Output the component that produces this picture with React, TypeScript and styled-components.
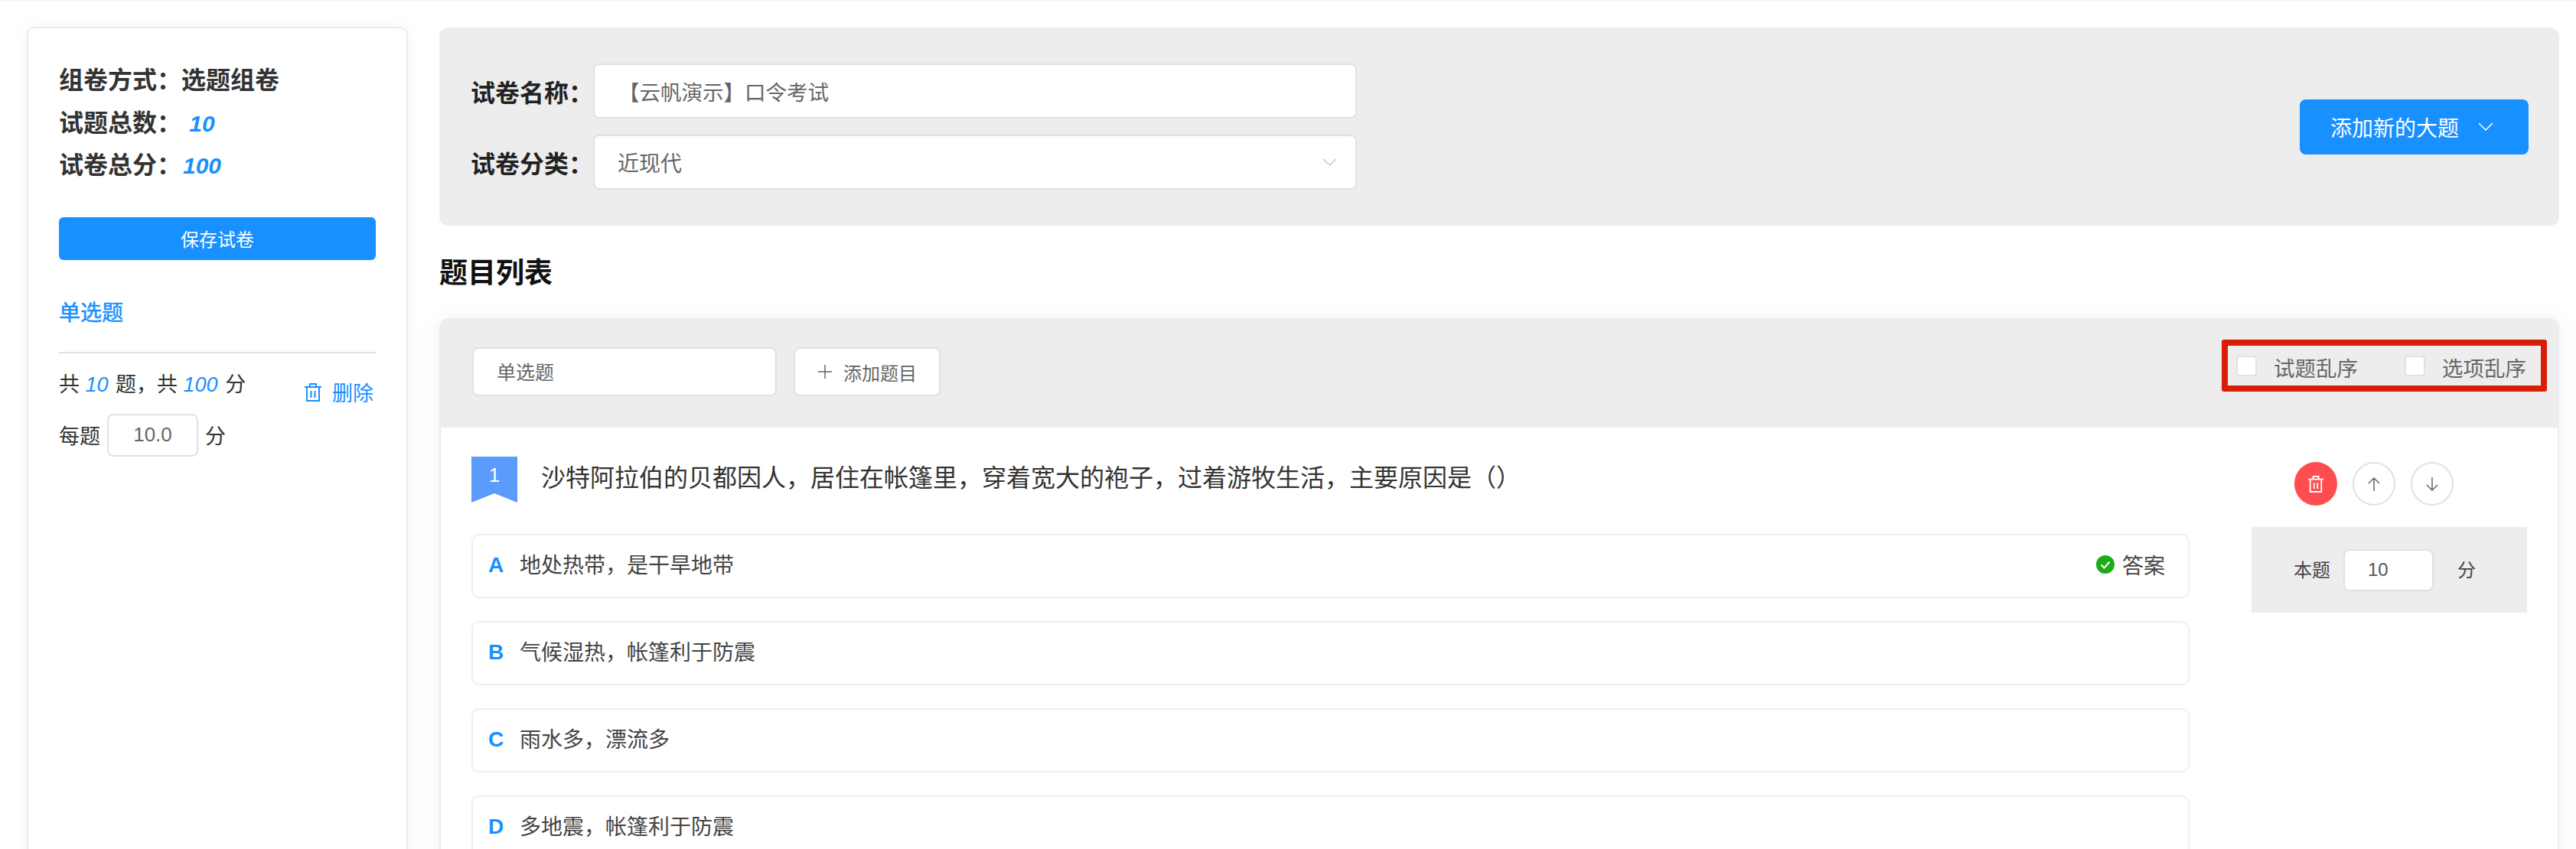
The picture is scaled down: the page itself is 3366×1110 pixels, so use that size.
import React from 'react';
import styled, { createGlobalStyle } from 'styled-components';

const FONT = '"Liberation Sans", "Noto Sans CJK SC", sans-serif';
const BLUE = '#1890ff';
const LINE = '#dfe1e8';
const PANEL = '#ededee';

const options = [
  { letter: 'A', text: '地处热带，是干旱地带', answer: true },
  { letter: 'B', text: '气候湿热，帐篷利于防震', answer: false },
  { letter: 'C', text: '雨水多，漂流多', answer: false },
  { letter: 'D', text: '多地震，帐篷利于防震', answer: false },
];

const TrashIcon = ({ color, w, h }: { color: string; w: number; h: number }) => (
  <svg width={w} height={h} viewBox="0 0 22 24" fill="none" stroke={color} strokeWidth="2">
    <path d="M0 5h22M7 5V1h8v4" />
    <path d="M3 5v18h16V5" />
    <path d="M8.5 10v9M13.5 10v9" />
  </svg>
);

const Chevron = ({ color, w, h }: { color: string; w: number; h: number }) => (
  <svg width={w} height={h} viewBox="0 0 20 11" fill="none" stroke={color} strokeWidth="1.5">
    <path d="M1 1l9 9 9-9" />
  </svg>
);

const ArrowIcon = ({ down }: { down?: boolean }) => (
  <svg width="16" height="18" viewBox="0 0 16 18" fill="none" stroke="#666" strokeWidth="1.5">
    {down ? <path d="M8 0v17M1 10l7 7 7-7" /> : <path d="M8 18V1M1 8l7-7 7 7" />}
  </svg>
);

const CheckCircle = () => (
  <svg width="24" height="24" viewBox="0 0 24 24">
    <circle cx="12" cy="12" r="12" fill="#1aad19" />
    <path d="M6.5 12.5l4 4 7-8" fill="none" stroke="#fff" strokeWidth="2" />
  </svg>
);

export default function App() {
  return (
    <>
      <GlobalStyle />
      <Page>
        <Sidebar>
          <SummaryLine>组卷方式：选题组卷</SummaryLine>
          <SummaryLine>
            试题总数：<SummaryNumber>10</SummaryNumber>
          </SummaryLine>
          <SummaryLine>
            试卷总分：<SummaryNumber>100</SummaryNumber>
          </SummaryLine>
          <SaveButton>保存试卷</SaveButton>
          <TypeTitle>单选题</TypeTitle>
          <Divider />
          <StatRow>
            <StatColumn>
              <StatLine>
                共 <StatNumber>10</StatNumber> 题，共 <StatNumber>100</StatNumber> 分
              </StatLine>
              <ScoreLine>
                每题
                <ScoreInput readOnly value="10.0" />
                分
              </ScoreLine>
            </StatColumn>
            <DeleteLink>
              <TrashIcon color={BLUE} w={22} h={24} />
              删除
            </DeleteLink>
          </StatRow>
        </Sidebar>

        <Main>
          <InfoPanel>
            <InfoForm>
              <FormRow>
                <FormLabel>试卷名称：</FormLabel>
                <TextField readOnly value="【云帆演示】口令考试" />
              </FormRow>
              <FormRow>
                <FormLabel>试卷分类：</FormLabel>
                <SelectField>
                  近现代
                  <Chevron color="#c4c6cf" w={19} h={10} />
                </SelectField>
              </FormRow>
            </InfoForm>
            <AddSectionButton>
              添加新的大题
              <Chevron color="#fff" w={20} h={11} />
            </AddSectionButton>
          </InfoPanel>

          <Heading>题目列表</Heading>

          <SectionCard>
            <SectionBar>
              <BarLeft>
                <TypeInput readOnly value="单选题" />
                <AddQuestionButton>
                  <svg width="20" height="20" viewBox="0 0 20 20" stroke="#666" strokeWidth="1.5">
                    <path d="M10 1v18M1 10h18" />
                  </svg>
                  添加题目
                </AddQuestionButton>
              </BarLeft>
              <ShuffleBox>
                <ShuffleItem>
                  <CheckBox />
                  <span>试题乱序</span>
                </ShuffleItem>
                <ShuffleItem>
                  <CheckBox />
                  <span>选项乱序</span>
                </ShuffleItem>
              </ShuffleBox>
            </SectionBar>

            <QuestionBody>
              <QuestionMain>
                <QuestionHead>
                  <Ribbon>1</Ribbon>
                  <QuestionText>
                    沙特阿拉伯的贝都因人，居住在帐篷里，穿着宽大的袍子，过着游牧生活，主要原因是（）
                  </QuestionText>
                </QuestionHead>
                <OptionList>
                  {options.map((o) => (
                    <OptionRow key={o.letter}>
                      <OptionLetter>{o.letter}</OptionLetter>
                      <OptionText>{o.text}</OptionText>
                      {o.answer && (
                        <AnswerMark>
                          <CheckCircle />
                          答案
                        </AnswerMark>
                      )}
                    </OptionRow>
                  ))}
                </OptionList>
              </QuestionMain>

              <QuestionSide>
                <ActionRow>
                  <RoundButton $danger>
                    <TrashIcon color="#fff" w={20} h={22} />
                  </RoundButton>
                  <RoundButton>
                    <ArrowIcon />
                  </RoundButton>
                  <RoundButton>
                    <ArrowIcon down />
                  </RoundButton>
                </ActionRow>
                <ScorePanel>
                  本题
                  <PanelInput readOnly value="10" />
                  分
                </ScorePanel>
              </QuestionSide>
            </QuestionBody>
          </SectionCard>
        </Main>
      </Page>
    </>
  );
}

const GlobalStyle = createGlobalStyle`
  html, body {
    margin: 0;
    padding: 0;
    height: 1110px;
    overflow: hidden;
    background: #fff;
    font-family: ${FONT};
  }
  * {
    box-sizing: border-box;
  }
`;

const Page = styled.div`
  display: flex;
  align-items: flex-start;
  gap: 41px;
  height: 1110px;
  overflow: hidden;
  padding: 35px 22px 0 35px;
  border-top: 2px solid #f6f6f8;
`;

const Sidebar = styled.aside`
  flex: 0 0 498px;
  height: 1200px;
  margin-top: -2px;
  padding: 41px 40px 0 40px;
  border: 2px solid #e8ecf5;
  border-radius: 10px;
  background: #fff;
  box-shadow: 0 0 20px rgba(120, 130, 170, 0.08);
`;

const SummaryLine = styled.div`
  display: flex;
  height: 55.5px;
  line-height: 55.5px;
  font-size: 32px;
  font-weight: 700;
  color: #333;
  white-space: nowrap;
`;

const SummaryNumber = styled.span`
  width: 54px;
  text-align: center;
  font-size: 30px;
  font-style: italic;
  color: ${BLUE};
`;

const SaveButton = styled.button`
  display: block;
  width: 100%;
  height: 56px;
  margin-top: 39px;
  border: none;
  border-radius: 6px;
  background: ${BLUE};
  color: #fff;
  font-family: ${FONT};
  font-size: 24px;
`;

const TypeTitle = styled.div`
  height: 40px;
  margin-top: 50px;
  line-height: 40px;
  font-size: 28px;
  color: ${BLUE};
  -webkit-text-stroke: 0.5px ${BLUE};
`;

const Divider = styled.div`
  height: 2px;
  margin: 30px 0 19px;
  background: ${LINE};
`;

const StatRow = styled.div`
  display: flex;
  justify-content: space-between;
  align-items: flex-start;
`;

const StatColumn = styled.div`
  display: flex;
  flex-direction: column;
  gap: 16px;
`;

const StatLine = styled.div`
  height: 44px;
  line-height: 44px;
  font-size: 27px;
  color: #333;
  white-space: nowrap;
`;

const StatNumber = styled.span`
  margin-right: 2px;
  color: ${BLUE};
  font-style: italic;
`;

const ScoreLine = styled.div`
  display: flex;
  align-items: center;
  gap: 9px;
  font-size: 27px;
  color: #333;
`;

const ScoreInput = styled.input`
  width: 119px;
  height: 56px;
  border: 2px solid ${LINE};
  border-radius: 8px;
  outline: none;
  text-align: center;
  font-family: ${FONT};
  font-size: 26px;
  color: #666;
`;

const DeleteLink = styled.div`
  display: flex;
  align-items: center;
  gap: 14px;
  height: 44px;
  margin: 10px 3px 0 0;
  font-size: 27px;
  color: ${BLUE};
  white-space: nowrap;
`;

const Main = styled.main`
  flex: 1;
  min-width: 0;
`;

const InfoPanel = styled.section`
  display: flex;
  align-items: center;
  justify-content: space-between;
  height: 259px;
  margin-top: -1px;
  padding: 0 40px 0 41px;
  border-radius: 12px;
  background: ${PANEL};
`;

const InfoForm = styled.div`
  display: flex;
  flex-direction: column;
  gap: 21px;
`;

const FormRow = styled.div`
  display: flex;
  align-items: center;
`;

const FormLabel = styled.label`
  width: 160px;
  font-size: 32px;
  font-weight: 700;
  color: #222;
  white-space: nowrap;
`;

const TextField = styled.input`
  width: 998px;
  height: 72px;
  padding: 0 31px;
  border: 2px solid ${LINE};
  border-radius: 8px;
  outline: none;
  background: #fff;
  font-family: ${FONT};
  font-size: 27.5px;
  color: #666;
`;

const SelectField = styled.div`
  display: flex;
  align-items: center;
  justify-content: space-between;
  width: 998px;
  height: 72px;
  padding: 0 24px 0 30px;
  border: 2px solid ${LINE};
  border-radius: 8px;
  background: #fff;
  font-size: 28px;
  color: #666;
`;

const AddSectionButton = styled.button`
  display: flex;
  align-items: center;
  gap: 25px;
  height: 72px;
  padding: 0 46px 0 40px;
  border: none;
  border-radius: 8px;
  background: ${BLUE};
  color: #fff;
  font-family: ${FONT};
  font-size: 28px;
  white-space: nowrap;
`;

const Heading = styled.h2`
  height: 50px;
  margin: 38px 0 33px;
  line-height: 50px;
  font-size: 37px;
  font-weight: 700;
  color: #111;
`;

const SectionCard = styled.section`
  height: 900px;
  border: 2px solid #e8ecf5;
  border-bottom: none;
  border-radius: 12px 12px 0 0;
  background: #fff;
  box-shadow: 0 0 24px rgba(120, 130, 170, 0.1);
`;

const SectionBar = styled.div`
  display: flex;
  align-items: center;
  justify-content: space-between;
  height: 141px;
  padding: 0 14px 5px 41px;
  border-radius: 10px 10px 0 0;
  background: ${PANEL};
`;

const BarLeft = styled.div`
  display: flex;
  gap: 22px;
`;

const TypeInput = styled.input`
  width: 398px;
  height: 64px;
  padding: 0 30px 3px;
  border: 2px solid ${LINE};
  border-radius: 8px;
  outline: none;
  background: #fff;
  font-family: ${FONT};
  font-size: 25px;
  color: #666;
`;

const AddQuestionButton = styled.button`
  display: flex;
  align-items: center;
  justify-content: center;
  gap: 14px;
  width: 192px;
  height: 64px;
  border: 2px solid ${LINE};
  border-radius: 8px;
  background: #fff;
  font-family: ${FONT};
  font-size: 24px;
  color: #666;
  white-space: nowrap;
`;

const ShuffleBox = styled.div`
  display: flex;
  align-items: center;
  gap: 61px;
  height: 68px;
  margin-bottom: 16px;
  padding: 0 19px 0 11px;
  border: 8px solid #d81e06;
  border-radius: 3px;
`;

const ShuffleItem = styled.label`
  display: flex;
  align-items: center;
  gap: 22px;
  font-size: 27.5px;
  color: #666;
  white-space: nowrap;

  span {
    padding-top: 3px;
  }
`;

const CheckBox = styled.i`
  display: block;
  width: 27px;
  height: 27px;
  border: 2px solid ${LINE};
  border-radius: 4px;
  background: #fff;
`;

const QuestionBody = styled.div`
  display: flex;
  justify-content: space-between;
  padding: 38px 40px 0 40px;
`;

const QuestionMain = styled.div`
  width: 2245px;
`;

const QuestionHead = styled.div`
  display: flex;
  gap: 31px;
  height: 60px;
`;

const Ribbon = styled.div`
  flex: 0 0 60px;
  height: 60px;
  padding-top: 6px;
  clip-path: polygon(0 0, 100% 0, 100% 100%, 50% 80%, 0 100%);
  background: #5b9bfb;
  color: #fff;
  font-size: 26px;
  line-height: 36px;
  text-align: center;
`;

const QuestionText = styled.div`
  line-height: 56px;
  font-size: 32px;
  color: #333;
  white-space: nowrap;
`;

const OptionList = styled.div`
  display: flex;
  flex-direction: column;
  gap: 30px;
  margin-top: 41px;
`;

const OptionRow = styled.div`
  display: flex;
  align-items: center;
  height: 84px;
  padding: 0 30px 3px 20px;
  border: 2px solid #efeff1;
  border-radius: 10px;
`;

const OptionLetter = styled.span`
  width: 41px;
  font-size: 28px;
  font-weight: 700;
  color: ${BLUE};
`;

const OptionText = styled.span`
  flex: 1;
  margin-bottom: 3px;
  font-size: 28px;
  color: #444;
`;

const AnswerMark = styled.span`
  display: flex;
  align-items: center;
  gap: 10px;
  margin-bottom: 2px;
  font-size: 28px;
  color: #444;
`;

const QuestionSide = styled.div`
  width: 360px;
`;

const ActionRow = styled.div`
  display: flex;
  gap: 20px;
  margin: 7px 0 28px 56px;
`;

const RoundButton = styled.div<{ $danger?: boolean }>`
  display: flex;
  align-items: center;
  justify-content: center;
  width: 56px;
  height: 57px;
  border-radius: 50%;
  border: ${(p) => (p.$danger ? 'none' : `2px solid ${LINE}`)};
  background: ${(p) => (p.$danger ? '#ff4d4f' : '#fff')};
`;

const ScorePanel = styled.div`
  display: flex;
  align-items: center;
  height: 112px;
  padding: 0 0 3px 55px;
  background: ${PANEL};
  font-size: 24px;
  color: #444;
`;

const PanelInput = styled.input`
  width: 118px;
  height: 55px;
  margin: 3px 31px 0 17px;
  padding: 0 30px;
  border: 2px solid ${LINE};
  border-radius: 8px;
  outline: none;
  background: #fff;
  font-family: ${FONT};
  font-size: 24px;
  color: #555;
`;
